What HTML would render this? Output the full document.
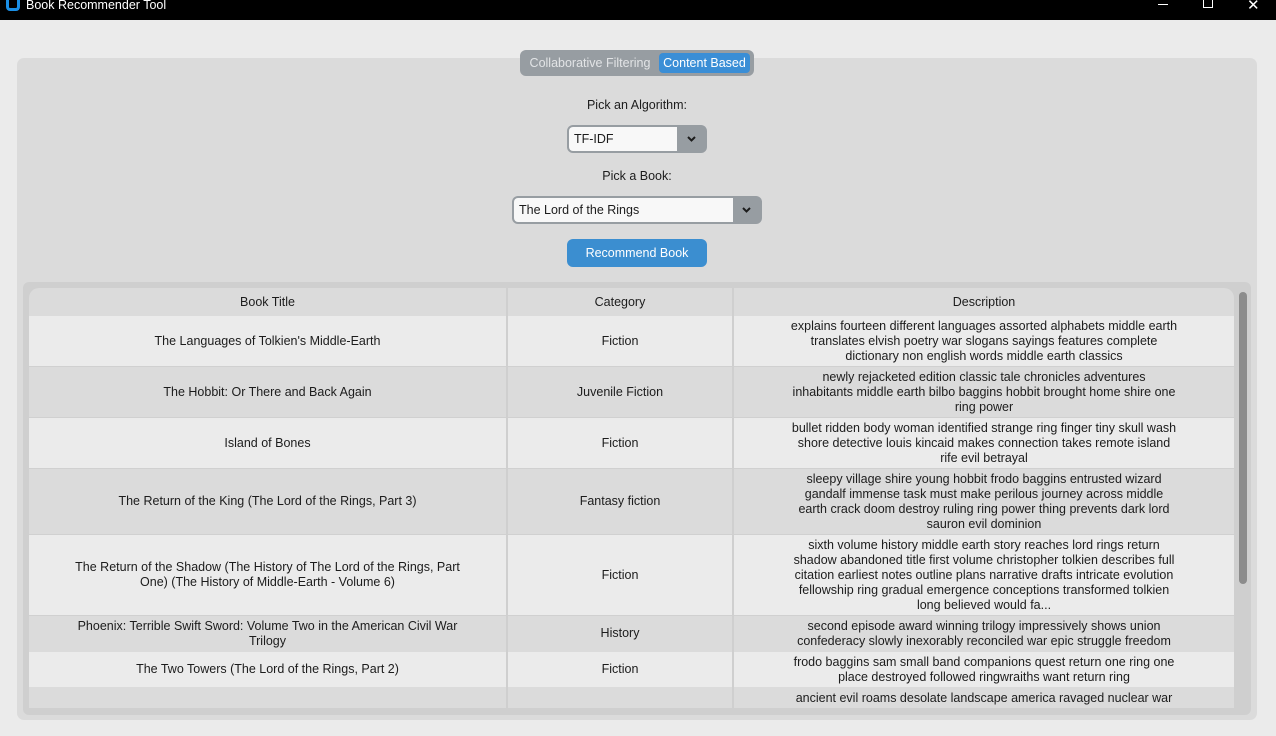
<!DOCTYPE html>
<html><head><meta charset="utf-8"><style>
*{margin:0;padding:0;box-sizing:border-box}
body{width:1276px;height:736px;background:#ebebeb;font-family:"Liberation Sans",sans-serif;font-size:12.5px;color:#1c1c1c;position:relative;overflow:hidden}
.a{position:absolute}
.tb{left:0;top:0;width:1276px;height:20px;background:#000;color:#fff;font-size:12px}
.c{display:flex;align-items:center;justify-content:center;text-align:center;line-height:15px}
.row{position:absolute;left:29px;width:1205px;display:flex}
.row>div{display:flex;align-items:center;justify-content:center;text-align:center;line-height:15px}
.c1{width:477px;padding:0 42px}
.c2{width:224px;margin-left:2px}
.c3{width:500px;margin-left:2px;padding:0 55px}
.sep{position:absolute;top:288px;height:420px;width:2px;background:#cfcfcf}
</style></head><body>
<div class="a tb">
 <div class="a" style="left:6px;top:0;width:14px;height:11px;border:3px solid #1a8fe6;border-top:none;border-radius:0 0 4px 4px"></div>
 <div class="a" style="left:26px;top:-2px;font-size:12.5px">Book Recommender Tool</div>
 <div class="a" style="left:1158px;top:4px;width:10px;height:1px;background:#fff"></div>
 <div class="a" style="left:1203px;top:0;width:10px;height:8px;border:1px solid #fff;border-top:none"></div>
 <div class="a" style="left:1247px;top:-4px;font-size:15px">✕</div>
</div>
<div class="a" style="left:17px;top:58px;width:1240px;height:662px;background:#dbdbdb;border-radius:7px"></div>
<div class="a" style="left:520px;top:50px;width:234px;height:26px;background:#979da2;border-radius:6px"></div>
<div class="a c" style="left:523px;top:53px;width:134px;height:20px;color:#e2e4e6">Collaborative Filtering</div>
<div class="a c" style="left:659px;top:53px;width:91px;height:20px;background:#3a8ed6;border-radius:4px;color:#fff">Content Based</div>
<div class="a c" style="left:537px;top:97px;width:200px;height:16px">Pick an Algorithm:</div>
<div class="a" style="left:567px;top:125px;width:140px;height:28px;background:#979da2;border-radius:6px"></div>
<div class="a" style="left:569px;top:127px;width:108px;height:24px;background:#f8f8f8;border-radius:4px 0 0 4px;padding:5px 0 0 5px">TF-IDF</div>
<svg class="a" style="left:687px;top:136px" width="9" height="6" viewBox="0 0 9 6"><path d="M1 1 L4.5 4.5 L8 1" stroke="#1c1c1c" stroke-width="2" fill="none"/></svg>
<div class="a c" style="left:537px;top:168px;width:200px;height:16px">Pick a Book:</div>
<div class="a" style="left:512px;top:196px;width:250px;height:28px;background:#979da2;border-radius:6px"></div>
<div class="a" style="left:514px;top:198px;width:219px;height:24px;background:#f8f8f8;border-radius:4px 0 0 4px;padding:5px 0 0 5px">The Lord of the Rings</div>
<svg class="a" style="left:742px;top:207px" width="9" height="6" viewBox="0 0 9 6"><path d="M1 1 L4.5 4.5 L8 1" stroke="#1c1c1c" stroke-width="2" fill="none"/></svg>
<div class="a c" style="left:567px;top:239px;width:140px;height:28px;background:#3b8ed0;border-radius:6px;color:#fff">Recommend Book</div>

<div class="a" style="left:23px;top:282px;width:1228px;height:433px;background:#cfcfcf;border-radius:6px"></div>
<div class="a" style="left:29px;top:288px;width:1205px;height:420px;background:#dbdbdb;border-radius:10px 10px 0 0;overflow:hidden"></div>
<div class="row" style="top:288px;height:28px"><div class="c1">Book Title</div><div class="c2">Category</div><div class="c3">Description</div></div>
<div class="row" style="top:316px;height:50px;background:#ebebeb"><div class="c1">The Languages of Tolkien's Middle-Earth</div><div class="c2">Fiction</div><div class="c3">explains fourteen different languages assorted alphabets middle earth translates elvish poetry war slogans sayings features complete dictionary non english words middle earth classics</div></div>
<div class="a" style="left:29px;top:366px;width:1205px;height:1px;background:#d0d0d0"></div>
<div class="row" style="top:367px;height:50px;background:#dbdbdb"><div class="c1">The Hobbit: Or There and Back Again</div><div class="c2">Juvenile Fiction</div><div class="c3">newly rejacketed edition classic tale chronicles adventures<br>inhabitants middle earth bilbo baggins hobbit brought home shire one<br>ring power</div></div>
<div class="a" style="left:29px;top:417px;width:1205px;height:1px;background:#d0d0d0"></div>
<div class="row" style="top:418px;height:50px;background:#ebebeb"><div class="c1">Island of Bones</div><div class="c2">Fiction</div><div class="c3">bullet ridden body woman identified strange ring finger tiny skull wash shore detective louis kincaid makes connection takes remote island rife evil betrayal</div></div>
<div class="a" style="left:29px;top:468px;width:1205px;height:1px;background:#d0d0d0"></div>
<div class="row" style="top:469px;height:65px;background:#dbdbdb"><div class="c1">The Return of the King (The Lord of the Rings, Part 3)</div><div class="c2">Fantasy fiction</div><div class="c3">sleepy village shire young hobbit frodo baggins entrusted wizard gandalf immense task must make perilous journey across middle earth crack doom destroy ruling ring power thing prevents dark lord sauron evil dominion</div></div>
<div class="a" style="left:29px;top:534px;width:1205px;height:1px;background:#d0d0d0"></div>
<div class="row" style="top:535px;height:80px;background:#ebebeb"><div class="c1">The Return of the Shadow (The History of The Lord of the Rings, Part One) (The History of Middle-Earth - Volume 6)</div><div class="c2">Fiction</div><div class="c3">sixth volume history middle earth story reaches lord rings return shadow abandoned title first volume christopher tolkien describes full citation earliest notes outline plans narrative drafts intricate evolution fellowship ring gradual emergence conceptions transformed tolkien long believed would fa...</div></div>
<div class="a" style="left:29px;top:615px;width:1205px;height:1px;background:#d0d0d0"></div>
<div class="row" style="top:616px;height:35px;background:#dbdbdb"><div class="c1">Phoenix: Terrible Swift Sword: Volume Two in the American Civil War Trilogy</div><div class="c2">History</div><div class="c3">second episode award winning trilogy impressively shows union confederacy slowly inexorably reconciled war epic struggle freedom</div></div>
<div class="row" style="top:652px;height:35px;background:#ebebeb"><div class="c1">The Two Towers (The Lord of the Rings, Part 2)</div><div class="c2">Fiction</div><div class="c3">frodo baggins sam small band companions quest return one ring one place destroyed followed ringwraiths want return ring</div></div>
<div class="row" style="top:688px;height:20px;background:#dbdbdb;overflow:hidden;align-items:flex-start"><div class="c1"></div><div class="c2"></div><div class="c3" style="padding-top:3px">ancient evil roams desolate landscape america ravaged nuclear war</div></div>
<div class="sep" style="left:506px"></div>
<div class="sep" style="left:732px"></div>
<div class="a" style="left:1239px;top:292px;width:8px;height:292px;background:#8c8c8c;border-radius:4px"></div>
</body></html>
